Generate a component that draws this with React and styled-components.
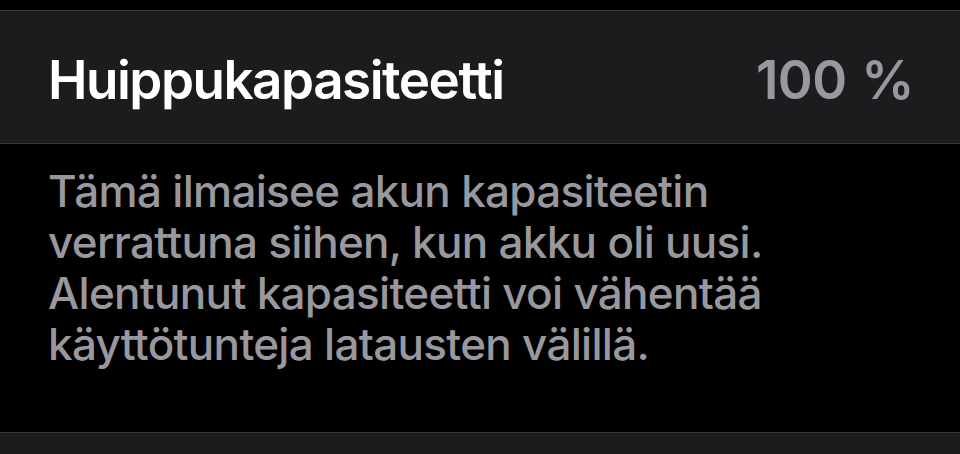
import React from 'react';
import styled, { createGlobalStyle } from 'styled-components';

const GlobalStyle = createGlobalStyle`
  html, body {
    margin: 0;
    padding: 0;
    background: #000;
  }
  body {
    font-family: Inter, "Noto Sans", "Liberation Sans", sans-serif;
    -webkit-font-smoothing: antialiased;
  }
`;

const Screen = styled.div`
  width: 960px;
  height: 454px;
  overflow: hidden;
  background: #000;
  display: flex;
  flex-direction: column;
`;

const Gap = styled.div`
  height: ${({ h }) => h}px;
  flex-shrink: 0;
`;

// one grouped cell, hairlines on top and bottom
const Cell = styled.div`
  height: ${({ h }) => h}px;
  flex-shrink: 0;
  background: #1c1c1e;
  border-top: 1px solid #3a3a3c;
  border-bottom: ${({ open }) => (open ? 'none' : '1px solid #3a3a3c')};
  display: flex;
  align-items: center;
  justify-content: space-between;
  padding: 5px 46px 0 48px;
  box-sizing: border-box;
`;

const Label = styled.span`
  color: #fff;
  font-size: 53px;
  font-weight: 600;
  letter-spacing: -1.5px;
`;

const Value = styled.span`
  color: #98989e;
  font-size: 53px;
  font-weight: 600;
  letter-spacing: -0.6px;
  word-spacing: 2px;
`;

const Footer = styled.p`
  margin: 0;
  flex: 1;
  padding: 22px 48px 0;
  color: #98989e;
  font-size: 44px;
  line-height: 51px;
  font-weight: 500;
  letter-spacing: -0.7px;
`;

export default function App() {
  return (
    <Screen>
      <GlobalStyle />
      <Gap h={10} />
      <Cell h={134}>
        <Label>Huippukapasiteetti</Label>
        <Value>100 %</Value>
      </Cell>
      <Footer>
        Tämä ilmaisee akun kapasiteetin<br />
        verrattuna siihen, kun akku oli uusi.<br />
        Alentunut kapasiteetti voi vähentää<br />
        käyttötunteja latausten välillä.
      </Footer>
      <Cell h={22} open />
    </Screen>
  );
}
